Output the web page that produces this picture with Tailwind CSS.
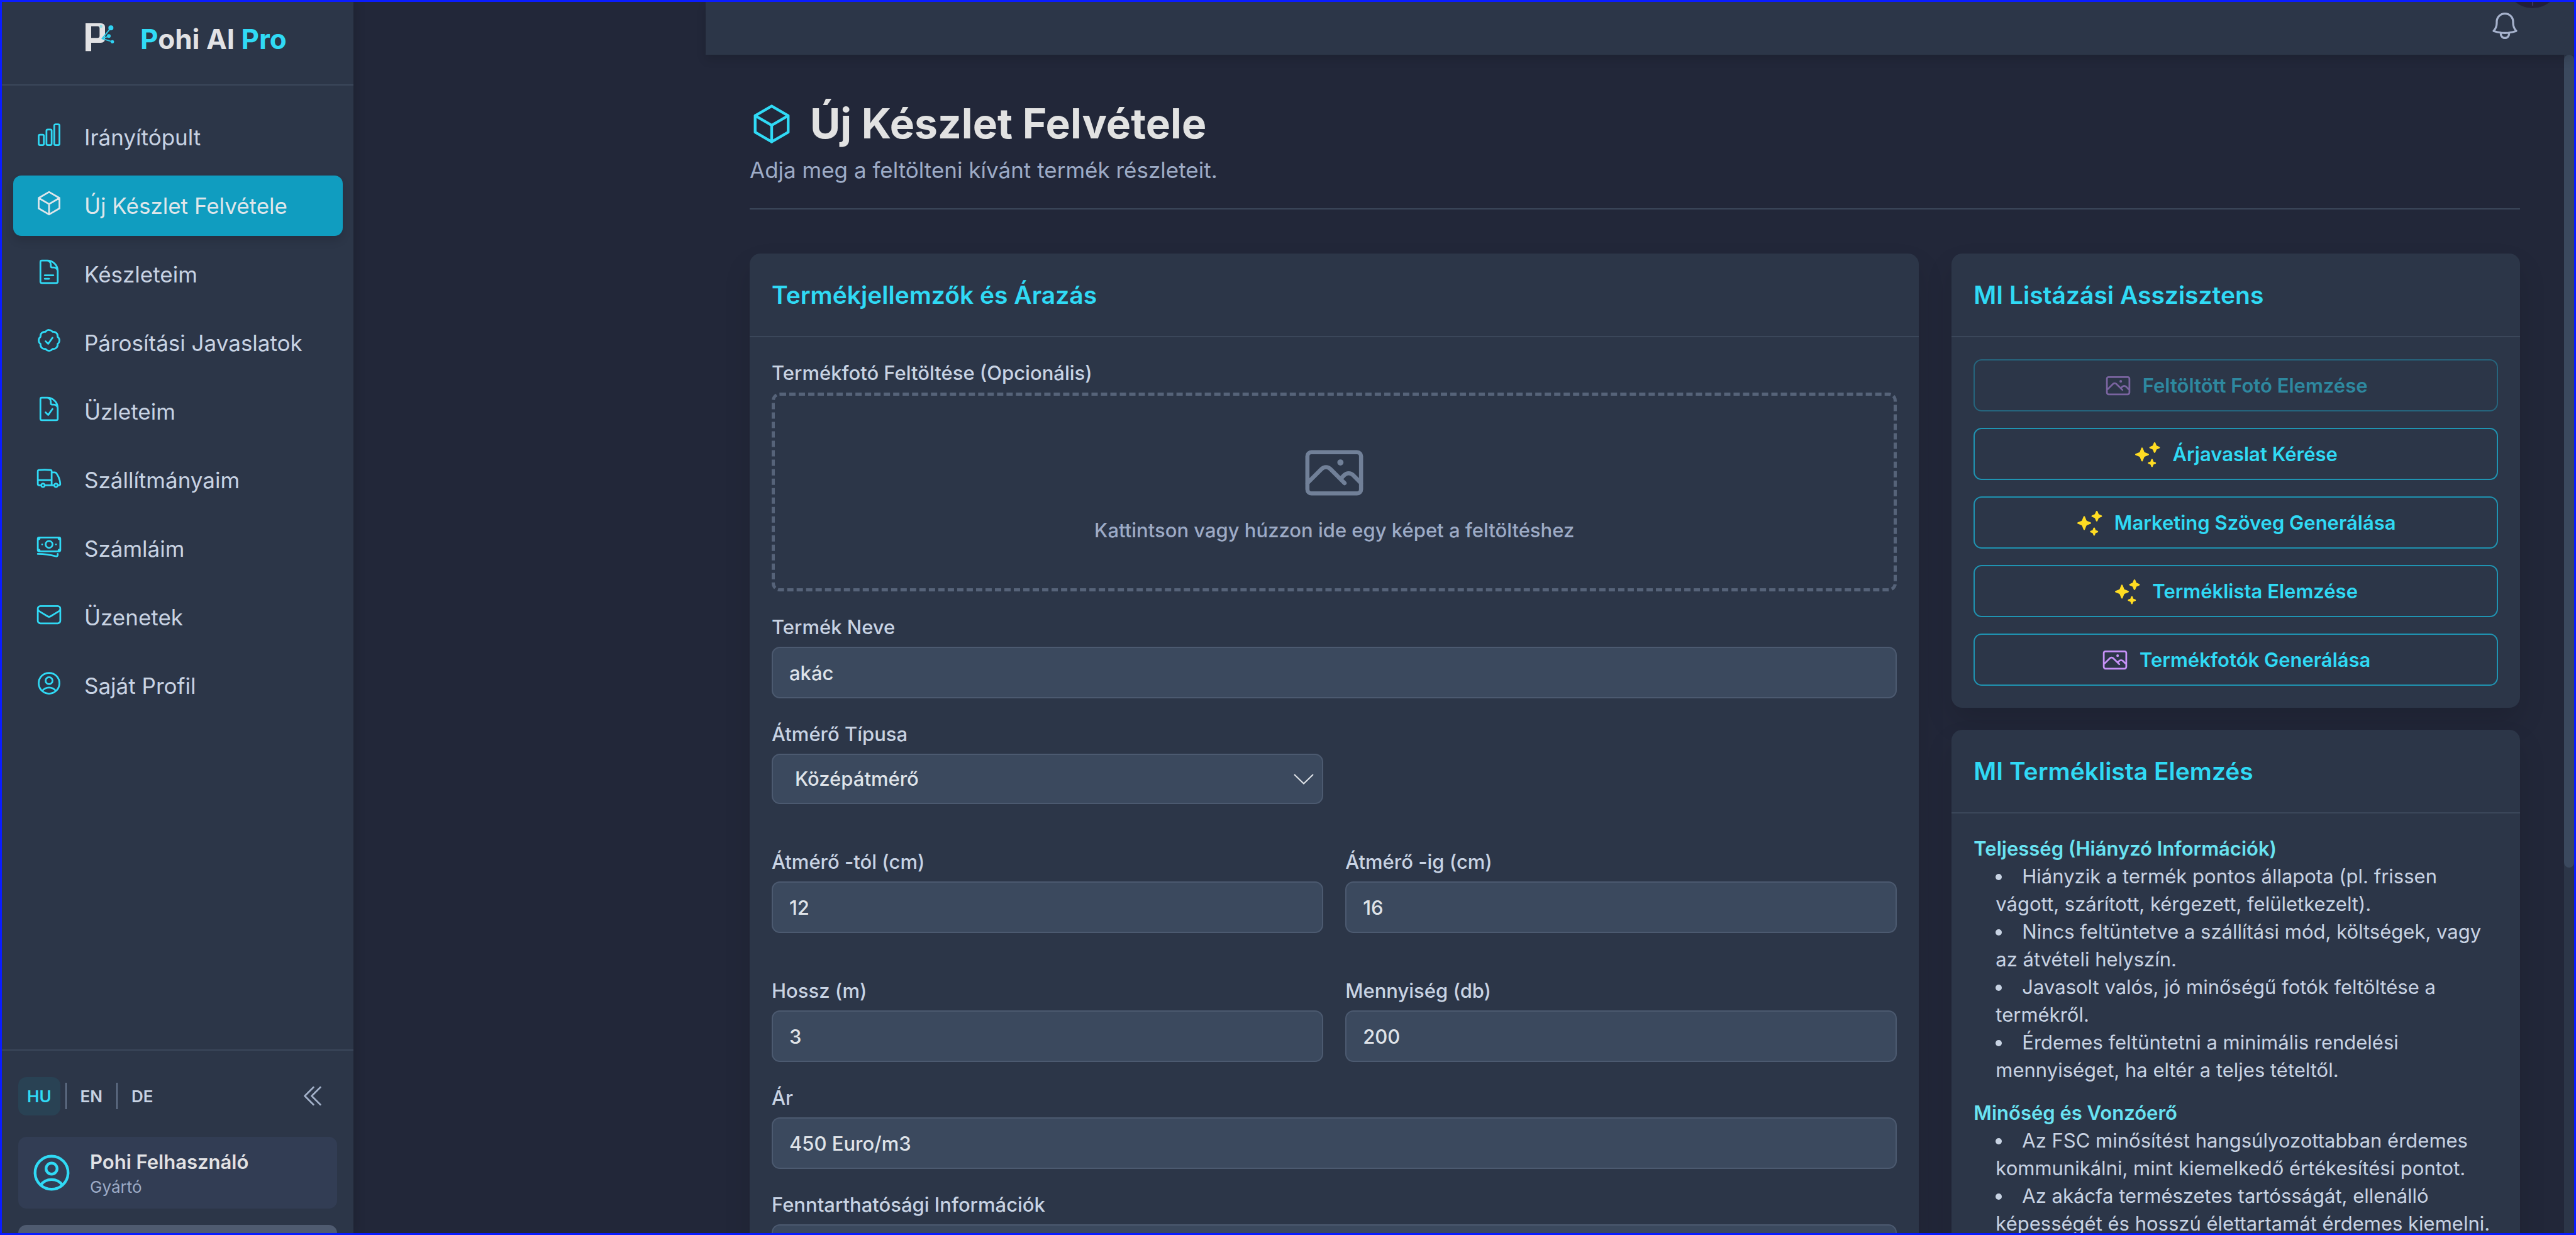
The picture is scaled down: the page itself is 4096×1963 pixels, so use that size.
<!DOCTYPE html>
<html lang="hu">
<head>
<meta charset="utf-8">
<title>Pohi AI Pro – Új Készlet Felvétele</title>
<script src="https://cdn.jsdelivr.net/npm/@tailwindcss/browser@4"></script>
</head>
<body class="bg-[#222739] font-['Inter',sans-serif] text-[#c8d3e3]">
<svg class="hidden" aria-hidden="true">
  <symbol id="photo" viewBox="0 0 24 24" fill="none" stroke="currentColor" stroke-width="1.5" stroke-linecap="round" stroke-linejoin="round"><path d="m2.25 15.75 5.159-5.159a2.25 2.25 0 0 1 3.182 0l5.159 5.159m-1.5-1.5 1.409-1.409a2.25 2.25 0 0 1 3.182 0l2.909 2.909m-18 3.75h16.5a1.5 1.5 0 0 0 1.5-1.5V6a1.5 1.5 0 0 0-1.5-1.5H3.75A1.5 1.5 0 0 0 2.25 6v12a1.5 1.5 0 0 0 1.5 1.5Zm10.5-11.25h.008v.008h-.008V8.25Zm.375 0a.375.375 0 1 1-.75 0 .375.375 0 0 1 .75 0Z"/></symbol>
  <symbol id="sparkles" viewBox="0 0 24 24" fill="currentColor" stroke="currentColor" stroke-width="1.4" stroke-linejoin="round"><path d="M7.100 6.900 8.300 10Q8.600 10.700 9.300 11L12.400 12.200 9.300 13.400Q8.600 13.700 8.300 14.400L7.100 17.500 5.900 14.400Q5.600 13.700 4.900 13.400L1.800 12.200 4.900 11Q5.600 10.700 5.900 10ZM18 2.300 18.900 4.500Q19.100 5.100 19.700 5.300L21.900 6.200 19.700 7.100Q19.100 7.300 18.900 7.900L18 10.100 17.100 7.900Q16.900 7.300 16.300 7.100L14.100 6.200 16.300 5.300Q16.900 5.100 17.100 4.500ZM15.700 16.800 16.300 18.400Q16.500 18.800 16.900 19L18.500 19.600 16.900 20.200Q16.500 20.400 16.300 20.800L15.700 22.400 15.100 20.800Q14.900 20.400 14.500 20.200L12.900 19.600 14.500 19Q14.900 18.800 15.100 18.400Z"/></symbol>
  <symbol id="cube" viewBox="0 0 24 24" fill="none" stroke="currentColor" stroke-width="1.5" stroke-linecap="round" stroke-linejoin="round"><path d="m21 7.500-9-5.250L3 7.500m18 0-9 5.250m9-5.250v9l-9 5.250M3 7.500l9 5.250M3 7.500v9l9 5.250m0-9v9"/></symbol>
  <symbol id="user" viewBox="0 0 24 24" fill="none" stroke="currentColor" stroke-width="1.5" stroke-linecap="round" stroke-linejoin="round"><path d="M17.982 18.725A7.488 7.488 0 0 0 12 15.750a7.488 7.488 0 0 0-5.982 2.975m11.963 0a9 9 0 1 0-11.963 0m11.963 0A8.966 8.966 0 0 1 12 21a8.966 8.966 0 0 1-5.982-2.275M15 9.750a3 3 0 1 1-6 0 3 3 0 0 1 6 0Z"/></symbol>
</svg>

<div class="flex h-screen overflow-hidden border-[3px] border-[#0a1cff]">

  <!-- Sidebar -->
  <aside class="z-10 flex w-[559px] shrink-0 flex-col bg-[#2c3648] shadow-[4px_0_16px_rgba(0,0,0,0.12)]">
    <div class="flex h-[133px] shrink-0 items-center gap-[40px] border-b-2 border-[#3b475a] pb-[12px] pl-[133px]">
      <svg class="mb-[6px] h-[45px] w-[47px]" viewBox="30 30 141 135" aria-hidden="true">
        <path fill="#e2e2e4" fill-rule="evenodd" d="M30 30H103Q123 30 123 50V103Q123 123 103 123H57V163H30ZM57 44V100H87Q97 100 97 90V54Q97 44 87 44Z"/>
        <circle cx="104" cy="45" r="7" fill="#93dfe8"/>
        <path d="M151 52 109 103 141 91M109 103 158 118" fill="none" stroke="#2cc8e6" stroke-width="6" stroke-linejoin="round"/>
        <g fill="#2fd2f2"><circle cx="151" cy="52" r="12"/><circle cx="141" cy="91" r="9"/><circle cx="158" cy="118" r="8"/></g>
      </svg>
      <span class="text-[44px] leading-[61px] font-bold text-[#e2e2e4]"><span class="text-[#30daf5]">P</span>ohi AI <span class="text-[#30daf5]">Pro</span></span>
    </div>

    <nav class="min-h-0 flex-1 overflow-hidden pr-[17px] pl-[18px] pt-[34px] text-[35px] leading-[52px]">
      <ul class="flex flex-col gap-[13px]">
        <li><a href="#" class="flex h-24 items-center gap-[34px] rounded-[13px] px-[35px]"><svg class="mb-2 size-11 text-[#30daf5]" viewBox="0 0 24 24" fill="none" stroke="currentColor" stroke-width="1.500" stroke-linecap="round" stroke-linejoin="round"><path d="M3 13.125C3 12.504 3.504 12 4.125 12h2.250c.621 0 1.125.504 1.125 1.125v6.750C7.500 20.496 6.996 21 6.375 21h-2.250A1.125 1.125 0 0 1 3 19.875v-6.750ZM9.750 8.625c0-.621.504-1.125 1.125-1.125h2.250c.621 0 1.125.504 1.125 1.125v11.250c0 .621-.504 1.125-1.125 1.125h-2.250a1.125 1.125 0 0 1-1.125-1.125V8.625ZM16.500 4.125c0-.621.504-1.125 1.125-1.125h2.250C20.496 3 21 3.504 21 4.125v15.750c0 .621-.504 1.125-1.125 1.125h-2.250a1.125 1.125 0 0 1-1.125-1.125V4.125Z"/></svg>Irányítópult</a></li>
        <li><a href="#" aria-current="page" class="flex h-24 items-center gap-[34px] rounded-[13px] bg-[#109dc0] px-[35px] text-[#dfe6ea] shadow-[0_8px_14px_rgba(0,0,0,0.12)]"><svg class="mb-2 size-11"><use href="#cube"/></svg>Új Készlet Felvétele</a></li>
        <li><a href="#" class="flex h-24 items-center gap-[34px] rounded-[13px] px-[35px]"><svg class="mb-2 size-11 text-[#30daf5]" viewBox="0 0 24 24" fill="none" stroke="currentColor" stroke-width="1.500" stroke-linecap="round" stroke-linejoin="round"><path d="M19.500 14.250v-2.625a3.375 3.375 0 0 0-3.375-3.375h-1.500A1.125 1.125 0 0 1 13.500 7.125v-1.500a3.375 3.375 0 0 0-3.375-3.375H8.250m0 12.750h7.500m-7.500 3H12M10.500 2.250H5.625c-.621 0-1.125.504-1.125 1.125v17.250c0 .621.504 1.125 1.125 1.125h12.750c.621 0 1.125-.504 1.125-1.125V11.250a9 9 0 0 0-9-9Z"/></svg>Készleteim</a></li>
        <li><a href="#" class="flex h-24 items-center gap-[34px] rounded-[13px] px-[35px]"><svg class="mb-2 size-11 text-[#30daf5]" viewBox="0 0 24 24" fill="none" stroke="currentColor" stroke-width="1.500" stroke-linecap="round" stroke-linejoin="round"><path d="M9 12.750 11.250 15 15 9.750M21 12c0 1.268-.630 2.390-1.593 3.068a3.745 3.745 0 0 1-1.043 3.296 3.745 3.745 0 0 1-3.296 1.043A3.745 3.745 0 0 1 12 21c-1.268 0-2.390-.630-3.068-1.593a3.746 3.746 0 0 1-3.296-1.043 3.745 3.745 0 0 1-1.043-3.296A3.745 3.745 0 0 1 3 12c0-1.268.630-2.390 1.593-3.068a3.745 3.745 0 0 1 1.043-3.296 3.746 3.746 0 0 1 3.296-1.043A3.746 3.746 0 0 1 12 3c1.268 0 2.390.630 3.068 1.593a3.746 3.746 0 0 1 3.296 1.043 3.746 3.746 0 0 1 1.043 3.296A3.745 3.745 0 0 1 21 12Z"/></svg>Párosítási Javaslatok</a></li>
        <li><a href="#" class="flex h-24 items-center gap-[34px] rounded-[13px] px-[35px]"><svg class="mb-2 size-11 text-[#30daf5]" viewBox="0 0 24 24" fill="none" stroke="currentColor" stroke-width="1.500" stroke-linecap="round" stroke-linejoin="round"><path d="M10.125 2.250h-4.500c-.621 0-1.125.504-1.125 1.125v17.250c0 .621.504 1.125 1.125 1.125h12.750c.621 0 1.125-.504 1.125-1.125v-9M10.125 2.250h.375a9 9 0 0 1 9 9v.375M10.125 2.250A3.375 3.375 0 0 1 13.500 5.625v1.500c0 .621.504 1.125 1.125 1.125h1.500a3.375 3.375 0 0 1 3.375 3.375M9 15l2.250 2.250L15 12"/></svg>Üzleteim</a></li>
        <li><a href="#" class="flex h-24 items-center gap-[34px] rounded-[13px] px-[35px]"><svg class="mb-2 size-11 text-[#30daf5]" viewBox="0 0 24 24" fill="none" stroke="currentColor" stroke-width="1.500" stroke-linecap="round" stroke-linejoin="round"><path d="M8.250 18.750a1.500 1.500 0 0 1-3 0m3 0a1.500 1.500 0 0 0-3 0m3 0h6m-9 0H3.375a1.125 1.125 0 0 1-1.125-1.125V14.250m17.250 4.500a1.500 1.500 0 0 1-3 0m3 0a1.500 1.500 0 0 0-3 0m3 0h1.125c.621 0 1.129-.504 1.090-1.124a17.902 17.902 0 0 0-3.213-9.193 2.056 2.056 0 0 0-1.580-.860H14.250M16.500 18.750h-2.250m0-11.177v-.958c0-.568-.422-1.048-.987-1.106a48.554 48.554 0 0 0-10.026 0 1.106 1.106 0 0 0-.987 1.106v7.635m12-6.677v6.677m0 4.500v-4.500m0 0h-12"/></svg>Szállítmányaim</a></li>
        <li><a href="#" class="flex h-24 items-center gap-[34px] rounded-[13px] px-[35px]"><svg class="mb-2 size-11 text-[#30daf5]" viewBox="0 0 24 24" fill="none" stroke="currentColor" stroke-width="1.500" stroke-linecap="round" stroke-linejoin="round"><path d="M2.250 18.750a60.070 60.070 0 0 1 15.797 2.101c.727.198 1.453-.342 1.453-1.096V18.750M3.750 4.500v.750A.750.750 0 0 1 3 6h-.750m0 0v-.375c0-.621.504-1.125 1.125-1.125H20.250M2.250 6v9m18-10.500v.750c0 .414.336.750.750.750h.750m-1.500-1.500h.375c.621 0 1.125.504 1.125 1.125v9.750c0 .621-.504 1.125-1.125 1.125h-.375m1.500-1.500H21a.750.750 0 0 0-.750.750v.750m0 0H3.750m0 0h-.375a1.125 1.125 0 0 1-1.125-1.125V15m1.500 1.500v-.750A.750.750 0 0 0 3 15h-.750M15 10.500a3 3 0 1 1-6 0 3 3 0 0 1 6 0Zm3 0h.008v.008H18V10.500Zm-12 0h.008v.008H6V10.500Z"/></svg>Számláim</a></li>
        <li><a href="#" class="flex h-24 items-center gap-[34px] rounded-[13px] px-[35px]"><svg class="mb-2 size-11 text-[#30daf5]" viewBox="0 0 24 24" fill="none" stroke="currentColor" stroke-width="1.500" stroke-linecap="round" stroke-linejoin="round"><path d="M21.750 6.750v10.500a2.250 2.250 0 0 1-2.250 2.250h-15a2.250 2.250 0 0 1-2.250-2.250V6.750m19.500 0A2.250 2.250 0 0 0 19.500 4.500h-15a2.250 2.250 0 0 0-2.250 2.250m19.500 0v.243a2.250 2.250 0 0 1-1.070 1.916l-7.500 4.615a2.250 2.250 0 0 1-2.360 0L3.320 8.910a2.250 2.250 0 0 1-1.070-1.916V6.750"/></svg>Üzenetek</a></li>
        <li><a href="#" class="flex h-24 items-center gap-[34px] rounded-[13px] px-[35px]"><svg class="mb-2 size-11 text-[#30daf5]"><use href="#user"/></svg>Saját Profil</a></li>
      </ul>
    </nav>

    <div class="h-[292px] shrink-0 overflow-hidden border-t-2 border-[#3b475a] px-[26px] pt-[33px]">
      <div class="flex items-center justify-between">
        <div class="flex items-center gap-[8px] text-[26px] leading-[35px] font-semibold">
          <button class="rounded-[13px] bg-[#294254] px-[14px] py-[13px] text-[#30daf5]">HU</button>
          <span class="h-[42px] w-[2px] bg-[#66758d]"></span>
          <button class="rounded-[13px] px-[14px] py-[13px]">EN</button>
          <span class="h-[42px] w-[2px] bg-[#66758d]"></span>
          <button class="rounded-[13px] px-[14px] py-[13px]">DE</button>
        </div>
        <button aria-label="Oldalsáv összecsukása" class="p-[17px] text-[#a2b0c8]"><svg class="size-11" viewBox="0 0 24 24" fill="none" stroke="currentColor" stroke-width="1.500" stroke-linecap="round" stroke-linejoin="round"><path d="m18.750 4.500-7.500 7.500 7.500 7.500m-6-15L5.250 12l7.500 7.500"/></svg></button>
      </div>
      <div class="mt-[26px] flex h-[114px] items-center gap-[26px] rounded-[13px] bg-[#323d54] px-[18px]">
        <svg class="size-[70px] text-[#30daf5]"><use href="#user"/></svg>
        <div>
          <p class="text-[31px] leading-[44px] font-semibold text-[#e2e2e4]">Pohi Felhasználó</p>
          <p class="text-[26px] leading-[35px] text-[#9dabc6]">Gyártó</p>
        </div>
      </div>
      <button aria-label="Kijelentkezés" class="mt-[26px] h-[83px] w-full rounded-[13px] bg-[#4f5b70]"></button>
    </div>
  </aside>

  <!-- Main column -->
  <div class="ml-[560px] flex min-w-0 flex-1 flex-col">
    <header class="relative z-10 flex h-[84px] shrink-0 items-center justify-end bg-[#2c3648] pr-[84px] pb-[9px] shadow-[0_8px_14px_rgba(0,0,0,0.12)]">
      <button aria-label="Értesítések" class="text-[#a6b2cc]"><svg class="size-[52px]" viewBox="0 0 24 24" fill="none" stroke="currentColor" stroke-width="1.500" stroke-linecap="round" stroke-linejoin="round"><path d="M14.857 17.082a23.848 23.848 0 0 0 5.454-1.310A8.967 8.967 0 0 1 18 9.750V9A6 6 0 0 0 6 9v.750a8.967 8.967 0 0 1-2.312 6.022c1.733.640 3.560 1.085 5.455 1.310m5.714 0a24.255 24.255 0 0 1-5.714 0m5.714 0a3 3 0 1 1-5.714 0"/></svg></button>
      <div class="absolute top-0 right-[38px] h-[10px] w-[56px] overflow-hidden">
        <svg class="h-full w-full" viewBox="0 0 56 10" aria-hidden="true"><circle cx="28" cy="-33" r="43" fill="#222036"/><path d="M28 0V6" stroke="#3d3560" stroke-width="2"/></svg>
      </div>
    </header>

    <div class="flex min-h-0 flex-1">
      <main class="min-w-0 flex-1 overflow-hidden px-[70px] pt-[70px]">
        <div class="border-b-2 border-[#3b475a] pb-[35px]">
          <h1 class="flex items-center gap-[26px] text-[66px] leading-[79px] font-bold text-[#e2e2e2]"><svg class="size-[70px] text-[#30daf5]"><use href="#cube"/></svg>Új Készlet Felvétele</h1>
          <p class="mt-[9px] text-[35px] leading-[51px] text-[#9dabc6]">Adja meg a feltölteni kívánt termék részleteit.</p>
        </div>

        <div class="mt-[70px] grid grid-cols-3 items-start gap-[52px]">
          <section class="col-span-2 rounded-[17px] bg-[#2c3648] shadow-[0_22px_44px_rgba(0,0,0,0.12)]">
            <h2 class="border-b-2 border-[#3b475a] p-[35px] text-[39px] leading-[61px] font-semibold text-[#30daf5]">Termékjellemzők és Árazás</h2>
            <form class="flex flex-col gap-[35px] p-[35px] text-[31px] leading-[44px] font-medium">
              <div>
                <label for="foto" class="mb-[9px] block">Termékfotó Feltöltése (Opcionális)</label>
                <button type="button" id="foto" class="flex w-full flex-col items-center gap-[17px] rounded-[13px] border-[5px] border-dashed border-[#566379] py-[70px] text-[#9dabc6]">
                  <svg class="size-[105px] text-[#718098]"><use href="#photo"/></svg>
                  Kattintson vagy húzzon ide egy képet a feltöltéshez
                </button>
              </div>
              <div>
                <label for="nev" class="mb-[9px] block">Termék Neve</label>
                <input id="nev" value="akác" class="h-[82px] w-full rounded-[13px] border-2 border-[#4c5a70] bg-[#3b495e] px-[26px] text-[#dfe3e8]">
              </div>
              <div class="grid grid-cols-2 gap-x-[35px]">
                <div class="mb-[35px]">
                  <label for="tipus" class="mb-[9px] block">Átmérő Típusa</label>
                  <div class="relative">
                    <select id="tipus" class="h-[80px] w-full appearance-none rounded-[13px] border-2 border-[#4c5a70] bg-[#3b495e] px-[35px] text-[#dfe3e8]"><option>Középátmérő</option></select>
                    <svg class="pointer-events-none absolute top-[32px] right-[15px] h-[17px] w-[32px]" viewBox="0 0 32 17" fill="none" stroke="#dfe3e8" stroke-width="2" aria-hidden="true"><path d="M1 1 16 15.500 31 1"/></svg>
                  </div>
                </div>
              </div>
              <div class="grid grid-cols-2 gap-x-[35px] gap-y-[70px]">
                <div>
                  <label for="tol" class="mb-[9px] block">Átmérő -tól (cm)</label>
                  <input id="tol" value="12" class="h-[82px] w-full rounded-[13px] border-2 border-[#4c5a70] bg-[#3b495e] px-[26px] text-[#dfe3e8]">
                </div>
                <div>
                  <label for="ig" class="mb-[9px] block">Átmérő -ig (cm)</label>
                  <input id="ig" value="16" class="h-[82px] w-full rounded-[13px] border-2 border-[#4c5a70] bg-[#3b495e] px-[26px] text-[#dfe3e8]">
                </div>
                <div>
                  <label for="hossz" class="mb-[9px] block">Hossz (m)</label>
                  <input id="hossz" value="3" class="h-[82px] w-full rounded-[13px] border-2 border-[#4c5a70] bg-[#3b495e] px-[26px] text-[#dfe3e8]">
                </div>
                <div>
                  <label for="db" class="mb-[9px] block">Mennyiség (db)</label>
                  <input id="db" value="200" class="h-[82px] w-full rounded-[13px] border-2 border-[#4c5a70] bg-[#3b495e] px-[26px] text-[#dfe3e8]">
                </div>
              </div>
              <div>
                <label for="ar" class="mb-[9px] block">Ár</label>
                <input id="ar" value="450 Euro/m3" class="h-[82px] w-full rounded-[13px] border-2 border-[#4c5a70] bg-[#3b495e] px-[26px] text-[#dfe3e8]">
              </div>
              <div>
                <label for="fennt" class="mb-[9px] block">Fenntarthatósági Információk</label>
                <input id="fennt" class="h-[82px] w-full rounded-[13px] border-2 border-[#4c5a70] bg-[#3b495e] px-[26px] text-[#dfe3e8]">
              </div>
            </form>
          </section>

          <div class="flex flex-col gap-[35px]">
            <section class="rounded-[17px] bg-[#2c3648] shadow-[0_22px_44px_rgba(0,0,0,0.12)]">
              <h2 class="border-b-2 border-[#3b475a] p-[35px] text-[39px] leading-[61px] font-semibold text-[#30daf5]">MI Listázási Asszisztens</h2>
              <div class="flex flex-col gap-[26px] p-[35px] text-[31px] leading-[44px] font-semibold text-[#30daf5]">
                <button disabled class="flex h-[83px] items-center justify-center gap-[17px] rounded-[13px] border-2 border-[#1f94b2] opacity-50"><svg class="size-11 text-[#c792f8]"><use href="#photo"/></svg>Feltöltött Fotó Elemzése</button>
                <button class="flex h-[83px] items-center justify-center gap-[17px] rounded-[13px] border-2 border-[#1f94b2]"><svg class="size-11 text-[#ffdc23]"><use href="#sparkles"/></svg>Árjavaslat Kérése</button>
                <button class="flex h-[83px] items-center justify-center gap-[17px] rounded-[13px] border-2 border-[#1f94b2]"><svg class="size-11 text-[#ffdc23]"><use href="#sparkles"/></svg>Marketing Szöveg Generálása</button>
                <button class="flex h-[83px] items-center justify-center gap-[17px] rounded-[13px] border-2 border-[#1f94b2]"><svg class="size-11 text-[#ffdc23]"><use href="#sparkles"/></svg>Terméklista Elemzése</button>
                <button class="flex h-[83px] items-center justify-center gap-[17px] rounded-[13px] border-2 border-[#1f94b2]"><svg class="size-11 text-[#c792f8]"><use href="#photo"/></svg>Termékfotók Generálása</button>
              </div>
            </section>

            <section class="rounded-[17px] bg-[#2c3648] shadow-[0_22px_44px_rgba(0,0,0,0.12)]">
              <h2 class="border-b-2 border-[#3b475a] p-[35px] text-[39px] leading-[61px] font-semibold text-[#30daf5]">MI Terméklista Elemzés</h2>
              <div class="flex flex-col gap-6 px-[35px] pt-[34px] pb-[35px] text-[31px] leading-[44px]">
                <div>
                  <h3 class="font-semibold text-[#69e3f2]">Teljesség (Hiányzó Információk)</h3>
                  <ul class="list-inside list-disc pl-[35px]">
                    <li>Hiányzik a termék pontos állapota (pl. frissen vágott, szárított, kérgezett, felületkezelt).</li>
                    <li>Nincs feltüntetve a szállítási mód, költségek, vagy az átvételi helyszín.</li>
                    <li>Javasolt valós, jó minőségű fotók feltöltése a termékről.</li>
                    <li>Érdemes feltüntetni a minimális rendelési mennyiséget, ha eltér a teljes tételtől.</li>
                  </ul>
                </div>
                <div>
                  <h3 class="font-semibold text-[#69e3f2]">Minőség és Vonzóerő</h3>
                  <ul class="list-inside list-disc pl-[35px]">
                    <li>Az FSC minősítést hangsúlyozottabban érdemes kommunikálni, mint kiemelkedő értékesítési pontot.</li>
                    <li>Az akácfa természetes tartósságát, ellenálló képességét és hosszú élettartamát érdemes kiemelni.</li>
                  </ul>
                </div>
              </div>
            </section>
          </div>
        </div>
      </main>
      <div class="w-4 shrink-0 bg-[#2c3648]" aria-hidden="true"><div class="h-[69%] rounded-full bg-[#3b495e]"></div></div>
    </div>
  </div>
</div>
</body>
</html>
